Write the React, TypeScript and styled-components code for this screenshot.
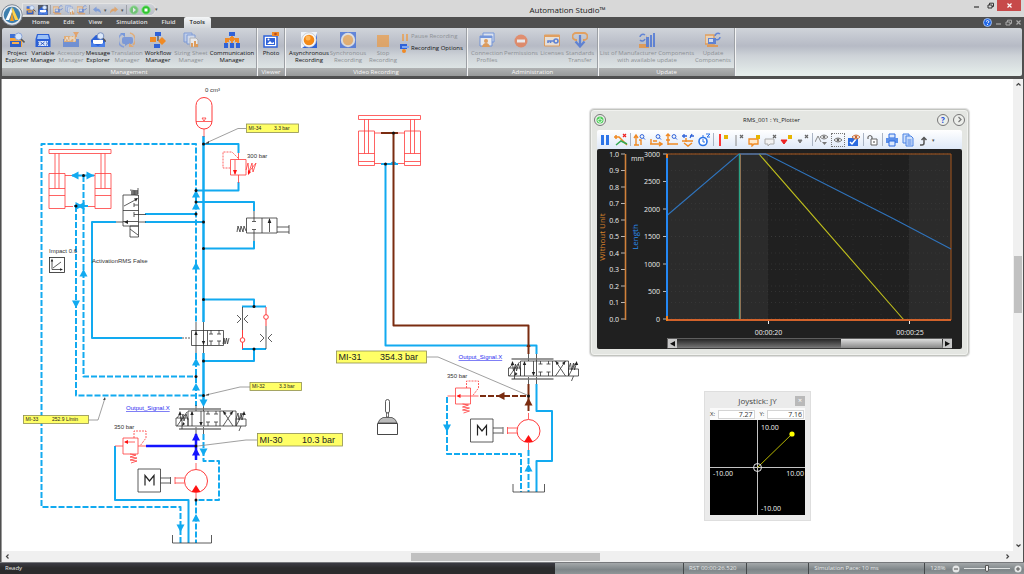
import React from 'react';
import styled, { createGlobalStyle, css } from 'styled-components';

const UI = "'Open Sans', 'Noto Sans', sans-serif";
const CAD = "'Liberation Sans', Arial, sans-serif";
const BLUE = '#12aaf0';
const DEEP = '#1414ff';
const BROWN = '#7a2c10';
const RED = '#ff3b3b';
const INK = '#333';

const Global = createGlobalStyle`
  * { box-sizing: border-box; }
  body { margin: 0; font-family: ${UI}; background: #4f4f4f; }
  button, input { font: inherit; color: inherit; border: 0; padding: 0; margin: 0; background: none; border-radius: 0; }
  svg { display: block; flex: none; }
`;

/* ---------- frame ---------- */

const Window = styled.div`
  display: flex;
  flex-direction: column;
  min-height: 100vh;
  background: #4f4f4f;
`;

const TitleBar = styled.header`
  display: flex;
  height: 17px;
  background: #d8d8d8;
  position: relative;
`;

const Logo = styled.button`
  position: absolute;
  left: 1px;
  top: 4px;
  width: 22px;
  height: 22px;
`;

const QuickAccess = styled.div`
  display: flex;
  align-items: center;
  align-self: flex-start;
  gap: 2px;
  height: 11px;
  margin: 4px 0 0 23px;
  padding: 0 4px 0 3px;
  border-radius: 0 6px 6px 0;
  background: linear-gradient(#cfd2d8, #b9bdc6);
  box-shadow: 0 0 0 1px #e4e4e4;
`;

const QuickButton = styled.button<{ $on?: boolean; $dim?: boolean }>`
  width: 10px;
  height: 10px;
  background: ${p => (p.$on ? '#555a66' : 'transparent')};
  svg { opacity: ${p => (p.$dim ? 0.55 : 1)}; }
`;

const QuickRule = styled.span`
  width: 1px;
  height: 9px;
  background: #9da0a8;
`;

const Caret = styled.button`
  font-size: 5px;
  line-height: 10px;
  color: #555;
`;

const AppTitle = styled.h1`
  flex: 1;
  margin: 0;
  padding: 3px 0 0 8px;
  text-align: center;
  font-size: 8px;
  line-height: 14px;
  font-weight: 400;
  color: #222;
`;

const WindowButton = styled.button<{ $close?: boolean }>`
  display: flex;
  align-items: center;
  justify-content: center;
  width: ${p => (p.$close ? '24px' : '14px')};
  height: 11px;
  margin-right: ${p => (p.$close ? '3px' : '0')};
  color: ${p => (p.$close ? '#fff' : '#333')};
  background: ${p => (p.$close ? '#c74a4a' : 'transparent')};
`;

const TabStrip = styled.nav`
  display: flex;
  align-items: stretch;
  gap: 2px;
  height: 11px;
  padding: 0 2px 0 26px;
`;

const Tab = styled.button<{ $on?: boolean }>`
  padding: 0 6px;
  font-size: 6px;
  line-height: 11px;
  font-weight: 600;
  color: ${p => (p.$on ? '#222' : '#e2e2e2')};
  border-radius: 2px 2px 0 0;
  background: ${p => (p.$on ? 'linear-gradient(#f4f6f7, #d2d6db)' : 'transparent')};
`;

const StripControls = styled.div`
  display: flex;
  align-items: center;
  gap: 3px;
  margin-left: auto;
  color: #aaa;
`;

/* ---------- ribbon ---------- */

const face = css`
  background: linear-gradient(#d0d4da 0, #b6bac5 18px, #ced3d8 28px, #e4ecea 46px);
`;

const Ribbon = styled.div`
  display: flex;
  gap: 2px;
  margin: 0 2px 3px;
  height: 48px;
  border-radius: 2px;
  ${face}
`;

const Group = styled.section<{ $width: number }>`
  display: flex;
  flex-direction: column;
  width: ${p => p.$width}px;
  box-shadow: 1px 0 0 #9ca0a5, 2px 0 0 #f4f4f4;
`;

const GroupBody = styled.div`
  display: flex;
  flex: 1;
  padding: 4px 0 0 2px;
`;

const GroupName = styled.h2`
  margin: 0;
  font-size: 6px;
  line-height: 8px;
  font-weight: 400;
  text-align: center;
  color: #f8f8f8;
  background: linear-gradient(#b0b2b3, #979999);
`;

const labelColour = css`
  color: #111;
  &:disabled { color: #8d9195; }
  &:disabled svg { opacity: 0.65; }
`;

const RibbonButton = styled.button<{ $width: number }>`
  display: flex;
  flex-direction: column;
  align-items: center;
  flex: none;
  gap: 2px;
  width: ${p => p.$width}px;
  font-size: 6px;
  line-height: 7px;
  white-space: pre;
  text-align: center;
  ${labelColour}
  span { display: flex; justify-content: center; width: 100%; }
`;

const SmallButtons = styled.div`
  display: flex;
  flex-direction: column;
  gap: 3px;
`;

const SmallButton = styled.button`
  display: flex;
  align-items: center;
  gap: 2px;
  font-size: 6px;
  line-height: 9px;
  white-space: nowrap;
  ${labelColour}
`;

/* ---------- work area ---------- */

const WorkArea = styled.main`
  display: grid;
  grid-template-columns: minmax(0, 1fr) 10px;
  grid-template-rows: 1fr 11px;
  flex: 1;
  margin: 0 1px 0 1px;
  border-left: 1px solid #999;
  background: #f0f0f0;
`;

const Sheet = styled.div`
  position: relative;
  background: #fff;
  overflow: hidden;
`;

const VScroll = styled.div`
  display: flex;
  flex-direction: column;
  align-items: center;
  padding: 2px 0;
`;

const HScroll = styled.div`
  display: flex;
  align-items: center;
  grid-column: 1;
  padding: 0 2px;
`;

const Gap = styled.span<{ $flex: number }>`
  flex: ${p => p.$flex} 1 0;
`;

const Thumb = styled.div<{ $w: string; $h: string }>`
  width: ${p => p.$w};
  height: ${p => p.$h};
  background: #c1c1c1;
`;

const ScrollButton = styled.button`
  width: 7px;
  height: 7px;
  color: #444;
`;

const StatusBar = styled.footer`
  display: flex;
  height: 12px;
  border-top: 1px solid #77797c;
  font-size: 6px;
  line-height: 11px;
  color: #e6e8e8;
  background: linear-gradient(#3c3c44, #2b2b2c 5px);
`;

const StatusReady = styled.div`
  flex: none;
  width: 54.2%;
  padding-left: 5px;
`;

const StatusCell = styled.div<{ $flex: number; $last?: boolean }>`
  display: flex;
  align-items: center;
  gap: 6px;
  flex: ${p => p.$flex} 1 0;
  min-width: 0;
  padding: 0 2px 0 5px;
  white-space: nowrap;
  border-right: ${p => (p.$last ? '0' : '1px solid #44484a')};
  background: linear-gradient(#a4a8aa, #7e8588 60%, #8f9698);
`;

const Zoom = styled.label`
  display: flex;
  align-items: center;
  flex: 1;
  min-width: 0;
  gap: 4px;
  input {
    appearance: none;
    flex: 1;
    width: 0;
    min-width: 0;
    height: 9px;
    background: linear-gradient(#dfe2e2, #dfe2e2) center / 100% 1px no-repeat;
  }
  input::-webkit-slider-thumb {
    appearance: none;
    width: 4px;
    height: 7px;
    border: 1px solid #555;
    border-radius: 0 0 2px 2px;
    background: #eee;
  }
`;

/* ---------- floating windows ---------- */

const Plotter = styled.section`
  position: absolute;
  left: 588px;
  top: 30px;
  width: 379px;
  padding: 2px 6px 6px;
  border: 1px solid #c2c4bf;
  border-radius: 4px;
  background: #e4e6e2;
  box-shadow: 0 0 1px 1px #dcdcdc, inset 0 0 0 1px #f1f2ef;
`;

const PlotterHead = styled.header`
  display: flex;
  align-items: center;
  gap: 4px;
  height: 15px;
  margin: 0 -3px 3px;
`;

const PlotterTitle = styled.h3`
  flex: 1;
  margin: 0;
  font-size: 6px;
  line-height: 12px;
  font-weight: 400;
  text-align: center;
  color: #222;
`;

const RoundButton = styled.button<{ $tone: string }>`
  width: 12px;
  height: 12px;
  border: 1px solid #777;
  border-radius: 50%;
  font-size: 8px;
  line-height: 10px;
  font-weight: 700;
  text-align: center;
  color: ${p => p.$tone};
  background: #eceeea;
  svg { margin: auto; }
`;

const PlotTools = styled.div`
  display: flex;
  align-items: center;
  height: 19px;
  border-radius: 2px 2px 0 0;
  background: linear-gradient(#fff, #dfe9f8);
`;

const ToolButton = styled.button<{ $boxed?: boolean }>`
  width: 16px;
  height: 16px;
  padding: 1px;
  outline: ${p => (p.$boxed ? '1px dotted #777' : '0')};
  outline-offset: -2px;
`;

const ToolRule = styled.span`
  width: 1px;
  height: 13px;
  margin: 0 1px;
  background: #aab4c4;
`;

const JoyPanel = styled.section`
  position: absolute;
  left: 702px;
  top: 312px;
  width: 107px;
  padding: 3px 5px 5px 5px;
  border: 1px solid #dedede;
  background: #ebebeb;
`;

const JoyHead = styled.header`
  display: flex;
  align-items: center;
  height: 11px;
  h3 {
    flex: 1;
    margin: 0;
    padding-left: 10px;
    text-align: center;
    font-size: 8px;
    line-height: 11px;
    font-weight: 400;
    color: #444;
  }
  button {
    width: 10px;
    height: 10px;
    font-size: 7px;
    line-height: 9px;
    color: #fff;
    background: #b9b9b9;
  }
`;

const JoyFields = styled.div`
  display: flex;
  gap: 5px;
  height: 12px;
  padding: 1px 1px 1px 0;
  margin-top: 2px;
  background: #fafafa;
  label {
    display: flex;
    align-items: center;
    flex: 1;
    gap: 3px;
    min-width: 0;
    font-size: 6px;
    color: #333;
  }
  input {
    flex: 1;
    min-width: 0;
    height: 9px;
    padding-right: 1px;
    border: 1px solid #d4d4d4;
    text-align: right;
    font-size: 7px;
    line-height: 7px;
    background: #fff;
  }
`;

/* ---------- ribbon icons, 16 x 16 ---------- */

const B = '#2f62d8';
const O = '#f08a24';

const icons: Record<string, React.ReactNode> = {
  project: (<>
    <path d="M1 4h5l1 2h6v9H1z" fill="#f6a53a" /><path d="M1 9h11v6H1z" fill="#2f5fc8" /><path d="M1 2h5v4H1z" fill="#3d6fd6" />
    <path d="M3 10h7v2H3z" fill="#f9b04e" /><circle cx="9.500" cy="4.500" r="3.500" fill="#d6e6fb" stroke="#8aa4d8" /><path d="M12 7l3.500 3.500" stroke="#555" strokeWidth="1.600" />
  </>),
  variable: (<>
    <path d="M2 2h12l1.500 5v8H.5V7z" fill="#2b60d6" /><path d="M3 3h10l1 4H2z" fill="#9cc0f5" /><path d="M3 9h10v5H3z" fill="#dbe7fb" />
    <path d="M5.500 10l4 3M9.500 10l-4 3M11.500 9.500q1.500 2 0 4M4 9.500q-1.500 2 0 4" stroke="#2050bb" fill="none" strokeWidth=".9" />
  </>),
  accessory: (<>
    <path d="M0 7h16v8H0z" fill="#4c79d8" /><path d="M1 4h12v6H1z" fill="#f0a24c" /><path d="M10 0h6l-2 3v2h-2V3z" fill="#f0903a" />
    <path d="M2 9l2-4 1.500 4M7 5v4M7 5h2v2H7M12 5h-2v2h2v2h-2" stroke="#fff" fill="none" strokeWidth=".8" />
  </>),
  message: (<>
    <path d="M1 8l5-5h5l4 5v7H1z" fill="#2b60d6" /><path d="M3 8h10v4H3z" fill="#fff" /><path d="M1 10l7 4 7-4v5H1z" fill="#4a7fe8" />
    <circle cx="10.500" cy="4" r="3.300" fill="#dce9fb" stroke="#7c93c0" /><path d="M13 6.500l3 3" stroke="#555" strokeWidth="1.500" />
  </>),
  translation: (<>
    <path d="M5 5h7q2 0 2 2v3q0 2-2 2H9l-3 2v-2H5q-2 0-2-2V7q0-2 2-2z" fill="#5a84de" />
    <path d="M5 15A7 7 0 0 1 3 2" stroke="#6b8fe0" strokeWidth="1.600" fill="none" /><path d="M11 1a7 7 0 0 1 3 12" stroke="#f0a050" strokeWidth="1.600" fill="none" /><path d="M1 1h5v4z" fill="#4d7ee0" /><path d="M15 15h-5v-4z" fill="#f0a050" />
  </>),
  workflow: (<>
    <path d="M8 4v5M4 13h5M11 9l2 2" stroke="#333" /><path d="M5 0h6v4H5z" fill={B} /><path d="M0 5h6v5H0z" fill={O} />
    <path d="M8 9l4-4 4 4-4 4z" fill={O} /><path d="M4 12h6v4H4z" fill={B} />
  </>),
  sizing: (<>
    <path d="M1 1h8v9H1z" fill="#bcd0f4" stroke="#5b84da" /><path d="M4 3h8v9H4z" fill="#d8e4fa" stroke="#5b84da" />
    <path d="M7 6h6l2 2v7H7z" fill="#fff" stroke="#aaa" /><path d="M8 11h2v4H8zM11 9h2v6h-2zM13 12h2v3h-2z" fill={O} />
  </>),
  communication: (<>
    <path d="M8 4v8M3 8l5-2 5 2M2 12V8M14 12V8" stroke={O} strokeWidth="1.800" fill="none" />
    <path d="M5 0h6v4H5zM0 11h4v5H0zM6 11h4v5H6zM12 11h4v5h-4z" fill={B} /><path d="M1 6h4v4H1zM11 6h4v4h-4zM6 5h4v4H6z" fill={O} />
  </>),
  photo: (<>
    <path d="M1 4h13v11H1z" fill="#fff" stroke={B} strokeWidth="1.500" /><path d="M3 6h9v7H3z" fill={B} /><path d="M4 12l3-3 2 2 2-1v2z" fill="#fff" /><circle cx="5.500" cy="7.500" r="1" fill="#fff" />
    <path d="M9 0h7v4H9z" fill={O} /><circle cx="12.500" cy="2" r="1.300" fill="#b9481c" />
  </>),
  async: (<>
    <path d="M0 0h16v16H0z" fill="#eef2f8" /><path d="M16 1v15H1l3-2h8l2-3z" fill={B} /><circle cx="8" cy="8" r="7.300" fill="#f6f6f6" stroke="#aeb7c6" strokeWidth=".6" /><circle cx="8" cy="8" r="5.300" fill="#f58a17" /><circle cx="7" cy="6" r="2.500" fill="#ffb557" />
  </>),
  sync: (<>
    <path d="M0 0h16v16H0z" fill="#2c60dc" /><circle cx="8" cy="8" r="7.200" fill="#e8e8e8" /><circle cx="8" cy="8" r="5.200" fill="#f5a545" />
  </>),
  stop: <path d="M2 3h12v12H2z" fill="#f0983a" />,
  connection: (<>
    <path d="M4 1h11v9H4z" fill="#e8f0fd" stroke="#4b7de0" /><path d="M1 4h12v10H1z" fill="#fff" stroke="#4b7de0" /><path d="M1 4h12v2H1z" fill="#4b7de0" />
    <circle cx="7" cy="9" r="2" fill={O} /><path d="M3 15q1-4 4-4t4 4z" fill={O} />
  </>),
  permissions: (<><circle cx="8" cy="9" r="6.500" fill="#f0703c" /><path d="M4 7.500h8v3H4z" fill="#fff" /></>),
  licenses: (<>
    <path d="M.5 3h15v11H.5z" fill="#fbeedd" stroke={O} /><path d="M1 3h14v2H1z" fill={O} /><circle cx="12" cy="9" r="2" fill="none" stroke={B} strokeWidth="1.600" /><path d="M10 9H4v2M6.500 9v2" stroke={B} strokeWidth="1.600" fill="none" />
  </>),
  standards: (<>
    <path d="M5 8H4a3.500 3.500 0 0 1 0-7h8a3.500 3.500 0 0 1 0 7h-1" fill="none" stroke={O} strokeWidth="1.800" /><path d="M8 3v11M3.500 9.500L8 14.500l4.500-5" fill="none" stroke={B} strokeWidth="2.200" />
  </>),
  list: (<>
    <path d="M0 12h7V3l3 9v4H0z" fill={O} /><path d="M7 5h3v10H7zM11 3h2v12h-2zM14 1h2v14h-2z" fill={B} />
    <path d="M1 5a3 3 0 0 1 5-2M6 7a3 3 0 0 1-5 1" stroke={B} strokeWidth="1.500" fill="none" />
  </>),
  update: (<>
    <path d="M0 3h9v9H0z" fill="#ffd9a8" stroke={O} strokeWidth="1.500" /><path d="M3 6h8v6H3z" fill={B} /><path d="M4 7h4v3H4z" fill="#dfe9fb" /><path d="M2 13h11v2H2z" fill={O} />
    <path d="M10 4a3 3 0 0 1 5-2M15 5a3 3 0 0 1-5 2" stroke={B} strokeWidth="1.500" fill="none" />
  </>),
};

const Icon = ({ name, size = 16 }: { name: string; size?: number }) => (
  <svg width={size} height={size} viewBox="0 0 16 16" aria-hidden="true">{icons[name]}</svg>
);

type Command = { icon: string; label: string; width: number; off?: boolean };

const management: Command[] = [
  { icon: 'project', label: 'Project\nExplorer', width: 26 },
  { icon: 'variable', label: 'Variable\nManager', width: 26 },
  { icon: 'accessory', label: 'Accessory\nManager', width: 30, off: true },
  { icon: 'message', label: 'Message\nExplorer', width: 24 },
  { icon: 'translation', label: 'Translation\nManager', width: 34, off: true },
  { icon: 'workflow', label: 'Workflow\nManager', width: 28 },
  { icon: 'sizing', label: 'Sizing Sheet\nManager', width: 38, off: true },
  { icon: 'communication', label: 'Communication\nManager', width: 44 },
];
const recording: Command[] = [
  { icon: 'async', label: 'Asynchronous\nRecording', width: 42 },
  { icon: 'sync', label: 'Synchronous\nRecording', width: 36, off: true },
  { icon: 'stop', label: 'Stop\nRecording', width: 34, off: true },
];
const administration: Command[] = [
  { icon: 'connection', label: 'Connection\nProfiles', width: 34, off: true },
  { icon: 'permissions', label: 'Permissions', width: 34, off: true },
  { icon: 'licenses', label: 'Licenses', width: 28, off: true },
  { icon: 'standards', label: 'Standards\nTransfer', width: 28, off: true },
];
const updates: Command[] = [
  { icon: 'list', label: 'List of Manufacturer Components\nwith available update', width: 92, off: true },
  { icon: 'update', label: 'Update\nComponents', width: 40, off: true },
];

const Commands = ({ items }: { items: Command[] }) => (
  <>
    {items.map(c => (
      <RibbonButton key={c.label} $width={c.width} disabled={c.off}>
        <Icon name={c.icon} />
        <span>{c.label}</span>
      </RibbonButton>
    ))}
  </>
);

/* ---------- plotter tools, 14 x 14 ---------- */

const lens = (x: number, y: number) => (
  <g stroke={B} fill="none"><circle cx={x} cy={y} r="1.900" /><path d={`M${x + 1.500} ${y + 1.500}l1.500 1.500`} /></g>
);
const eye = (x: number, y: number, c: string) => (
  <g transform={`translate(${x} ${y})`}><path d="M-4 0q4-4 8 0q-4 4-8 0z" fill="#fff" stroke={c} strokeWidth=".9" /><circle r="1.400" fill={c} /></g>
);
const cross = (x: number, y: number, c: string) => <path d={`M${x} ${y}l3 3m0-3l-3 3`} stroke={c} strokeWidth="1.200" />;

const tools: { name: string; art?: React.ReactNode; boxed?: boolean }[] = [
  { name: 'Pause', art: <path d="M3 2h3v10H3zM8 2h3v10H8z" fill="#2c74e8" /> },
  { name: 'Clear curves', art: <><path d="M0 4h5L13 12M2 2v4" stroke={O} fill="none" strokeWidth="1.500" /><path d="M2 12l5-4 6 3" stroke="#34a853" fill="none" strokeWidth="1.500" />{cross(9, 1, '#e22')}</> },
  { name: '|' },
  { name: 'Zoom vertical', art: <><path d="M3 12V3M1 5l2-3 2 3M1 12h5M6 7h2v5" stroke={O} fill="none" strokeWidth="1.400" />{lens(9, 3.500)}</> },
  { name: 'Zoom horizontal', art: <><path d="M1 11h11M10 9l3 2-3 2M2 6v5M4 8h4" stroke={O} fill="none" strokeWidth="1.400" />{lens(9, 3.500)}</> },
  { name: 'Zoom both', art: <><path d="M3 12V1M1 3l2-2 2 2M3 11h10M1 7h4" stroke={O} fill="none" strokeWidth="1.400" />{lens(9, 3.500)}</> },
  { name: 'Fit curves', art: <><path d="M1 3h5M3 1v4M9 3h4M11 1l-2 4" stroke={B} fill="none" strokeWidth="1.300" /><path d="M1 8h11M5 5v4M3 10l4 3 4-3" stroke={O} fill="none" strokeWidth="1.400" /></> },
  { name: 'Time range', art: <><circle cx="6" cy="8.500" r="4" fill="#fff" stroke="#2c74e8" strokeWidth="1.600" /><path d="M6 6v3h2M5 3h2M9 1h4l-3 3h3" stroke="#2c74e8" fill="none" /></> },
  { name: '|' },
  { name: 'Add cursor', art: <><path d="M4 1v12" stroke="#f22" strokeWidth="1.800" /><path d="M8 2h4v4H8z" fill="#e6b400" /></> },
  { name: 'Remove cursor', art: <><path d="M4 2v11" stroke="#888" />{cross(8, 2, '#666')}</> },
  { name: 'Add note', art: <><path d="M1 6h9v5H6l-2 2v-2H1z" fill="#ffe8c8" stroke={O} strokeWidth="1.300" /><path d="M8 2h4v4H8z" fill="#e6b400" /></> },
  { name: 'Remove note', art: <><path d="M1 6h9v5H6l-2 2v-2H1z" fill="#f2f2f2" stroke="#aaa" />{cross(9, 2, '#666')}</> },
  { name: 'Add marker', art: <><path d="M1 7h6L4 11z" fill="#e22" stroke="#e22" /><path d="M8 2h4v4H8z" fill="#e6b400" /></> },
  { name: 'Remove marker', art: <><path d="M2 7h4L4 10z" fill="#777" stroke="#777" />{cross(9, 2, '#666')}</> },
  { name: '|' },
  { name: 'Show curve', art: <><path d="M0 9l3-6 3 6" stroke="#888" fill="none" />{eye(9, 4, '#777')}<path d="M7 9h5l-2.500 3z" fill="#777" /></> },
  { name: 'Show all', art: eye(7, 7, '#666'), boxed: true },
  { name: 'Select curves', art: <><path d="M1 5h10v8H1z" fill="#2c6be0" /><path d="M3 9l2 2 4-5" stroke="#fff" strokeWidth="1.500" fill="none" />{eye(9, 4, '#c8642a')}</> },
  { name: '|' },
  { name: 'Unlock', art: <><path d="M5 6h6v6H5z" fill="#fff" stroke="#666" /><path d="M6 6V4Q4 1 2 4v2M8 8v2" stroke="#666" fill="none" strokeWidth="1.200" /></> },
  { name: '|' },
  { name: 'Print', art: <><path d="M4 1h6v4H4z" fill="#dbe8fc" stroke="#2c6be0" /><path d="M1 5h12v5H1z" fill="#5b8fea" /><path d="M4 8h6v5H4z" fill="#dbe8fc" stroke="#2c6be0" /></> },
  { name: 'Copy', art: <><path d="M2 1h6v9H2z" fill="#cfe0fb" stroke="#4b82e4" /><path d="M5 3h5l2 2v8H5z" fill="#cfe0fb" stroke="#4b82e4" /><path d="M6.500 7h4M6.500 9h4M6.500 11h4" stroke="#2c6be0" strokeWidth=".8" /></> },
  { name: 'Export', art: <path d="M3 12h2q2 0 2-2V5M4.500 7L7 4.500L9.500 7" stroke="#555" fill="none" strokeWidth="1.500" /> },
];

/* ---------- hydraulic symbols ---------- */

const Pipe = ({ d, c = BLUE, dash, w = 2 }: { d: string; c?: string; dash?: boolean; w?: number }) => (
  <path d={d} fill="none" stroke={c} strokeWidth={w} strokeDasharray={dash ? '6 2' : undefined} strokeLinejoin="round" />
);

const Thin = ({ d, c = INK, dash, fill = 'none' }: { d: string; c?: string; dash?: boolean; fill?: string }) => (
  <path d={d} fill={fill} stroke={c} strokeWidth={0.8} strokeDasharray={dash ? '2 1' : undefined} />
);

const Arrow = ({ x, y, r = 0, c = BLUE }: { x: number; y: number; r?: number; c?: string }) => (
  <path d="M0-4L4 3.500H-4z" fill={c} transform={`translate(${x} ${y}) rotate(${r})`} />
);

const Node = ({ x, y }: { x: number; y: number }) => <circle cx={x} cy={y} r={1.500} fill="#111" />;

const Note = ({ x, y, w, h, id, value, vx, size = 5 }: { x: number; y: number; w: number; h: number; id: string; value: string; vx: number; size?: number }) => (
  <g fontSize={size} fill="#222">
    <rect x={x} y={y} width={w} height={h} fill="#ffff66" stroke="#8f8f50" strokeWidth={0.800} />
    <text x={x + 2} y={y + h / 2 + size * 0.36}>{id}</text>
    <text x={vx} y={y + h / 2 + size * 0.36}>{value}</text>
  </g>
);

/* two cylinders under one beam; top and bottom bound the barrels, face and back the piston */
const Cylinders = ({ x, y, top, bottom, face: f, back }: { x: number; y: number; top: number; bottom: number; face: number; back: number }) => (
  <g transform={`translate(${x} ${y})`}>
    <Thin c={RED} d={`M0 0H62V4H0zM6 4V${f}M10 4V${f}M52 4V${f}M56 4V${f}M0 ${top}H16V${bottom}H0zM46 ${top}H62V${bottom}H46zM0 ${f}H16M46 ${f}H62M0 ${back}H16M46 ${back}H62`} />
    <Thin c={RED} d={`M16 ${top + 2}H24M38 ${top + 2}H46M16 ${bottom - 2}H24M38 ${bottom - 2}H46`} />
  </g>
);

const Spool = ({ x, y }: { x: number; y: number }) => (
  <g transform={`translate(${x} ${y})`}>
    <path d="M0 0H42M0 20H42" stroke="#777" strokeWidth="1.400" />
    <Thin d="M9 2H57V17H9zM25 2V17M41 2V17M-3 9H9V17H-3zM57 10H67V17H57z" />
    <Thin d="M13 17V3M22 2V16M29 2V5M27 5H31M37 2V5M35 5H39M29 17V13M27 13H31M37 17V13M35 13H39M44 2L54 17M54 2L44 17" />
    <Thin d="M-2 17L8 3M-2 9L1 5L2 12L4 5L5 12L7 5L9 11M57 10L59 4L60 11L62 4L63 11L65 4M57 17L64 4M3 9V20M62 17L60 22" />
    <path d="M13 2l-1.700 4h3.400zM22 17l-1.700-4h3.400zM1 2l-1.700 4h3.400zM65 2l-1.700 4h3.400zM44 2l1 4 2.500-2zM54 2l-1 4-2.500-2zM3 17l1-4 2 2z" fill="#222" />
  </g>
);

const Relief = ({ x, y, mid }: { x: number; y: number; mid: number }) => (
  <g transform={`translate(${x} ${y})`}>
    <Thin c={RED} d={`M8 0H23V16H8zM0 8H8M23 8H31M10 ${mid}H${mid === 8 ? 23 : 20}M15 16l6 1-6 2 7 1-7 2 7 1-6 2`} />
    <path d={`M9 ${mid}l4-2v4z`} fill="#f11" />
    <Thin c={RED} dash d="M19 0V-7H31V0L25 8" />
  </g>
);

const PumpUnit = ({ x, y }: { x: number; y: number }) => (
  <g transform={`translate(${x} ${y})`}>
    <Thin d="M0 0H22.500V23H0zM22.500 9H32M22.500 14H32M32.500 8V15" />
    <path d="M7 16.500V6.500L11.500 12L16 6.500V16.500" fill="none" stroke="#222" strokeWidth="1.200" />
    <Thin c={RED} d="M37 8V15M37 9H46.500M37 14H46.500M58 0V-6M58 23V31" />
    <circle cx={58} cy={12} r={11.500} fill="#fff" stroke={RED} />
    <path d="M58 16l4.500 7h-9z" fill="#f11" />
  </g>
);

const SignalLink = ({ x, y }: { x: number; y: number }) => (
  <a href="#output-signal"><text x={x} y={y} fill="#2a2af0" textDecoration="underline">Output_Signal.X</text></a>
);

const nodes = [
  [203.500, 144], [196, 190.500], [196, 202], [196, 214], [203.500, 222], [203.500, 248.500], [83.500, 175.500], [76, 206],
  [203.500, 299.500], [254, 306.500], [254, 349], [203.500, 361], [196, 376.500], [203.500, 395.500], [196, 446], [196, 500],
  [393.500, 133], [385.500, 164], [528.500, 396],
];

const Schematic = () => (
  <svg width="1010" height="468" viewBox="2 79 1010 468" fontFamily={CAD} fontSize="6" fill="#333">
    {/* return and pilot lines */}
    <Pipe dash d="M180.500 543V507H41.500V144H196V322" />
    <Pipe dash d="M83.500 176V376.500H196" />
    <Pipe dash d="M76 206V395.500H203" />
    <Pipe dash d="M196 353V406" />
    <Pipe dash d="M203.500 434V461H219V500H196V543" />
    {/* pressure lines */}
    <Pipe d="M203.500 136V322M203.500 353V402" w={2.500} />
    <Pipe d="M204 144H238.500V153M238.500 182V190.500H196" />
    <Pipe d="M196 202H254V211M254 241V248.500H204" />
    <Pipe d="M145 214H196M145 222H203M116 222H92V338H182" />
    <Pipe d="M204 299.500H254V306.500M242 306.500H266M242 349H266M254 349V361H204" />
    <Pipe d="M115 446V500H188.500V543" />
    <Pipe c={DEEP} d="M146 446H196M196 460V434" w={2.500} />

    {/* accumulator */}
    <text x="205" y="92">0 cm³</text>
    <rect x="196" y="97.500" width="16" height="31.500" rx="8" fill="#fff" stroke={RED} />
    <Thin c={RED} d="M196 121.500H212M202 118h4l-2 3zM204 129V137" />

    {/* 300 bar relief */}
    <text x="247" y="158">300 bar</text>
    <Thin c={RED} d="M230.500 159.500H246V175H230.500zM238.500 153V159.500M238.500 175V183M235 160V174M246 170l2-7 1 9 3-9 1 9 3-9M248 173l8-10" />
    <path d="M235 175l-2-5h4zM248 175l0-5 3 2z" fill="#f11" />
    <Thin c={RED} dash d="M238 158L232 152H223V168H230" />

    {/* manual valve */}
    <Thin d="M246.500 218H277V233H246.500zM262 218V233M254 211V221M252 221.500H256M254 241V230M252 229.500H256M269.500 232V219M277 227H289M277 232H289M289 225V234M237 232l1-6 2 6 1-6 2 6 1-6 2 5" />
    <path d="M269.500 218l-1.800 5h3.600z" fill="#222" />

    {/* twin cylinders */}
    <Cylinders x={49} y={149.500} top={24} bottom={59} face={39} back={46} />
    <Pipe d="M72 175.500H94M74 206H88" />
    <Arrow x={75} y={175.500} r={-90} /><Arrow x={90} y={175.500} r={90} />
    <Arrow x={79} y={206} r={90} /><Arrow x={81} y={206} r={-90} />

    {/* solenoid valve */}
    <Thin fill="#fff" d="M123 195H138.500V226H123zM123 210.500H138.500M130 226H138.500V237H130zM130 229L138 235M124 206L137 199M138 205H134M134 203V207M138 214.500H134M134 212V217M123 221.500H138" />
    <Thin d="M138 214.500H146M138 222H146M116 222H123M130 190l8 1-7 1 7 1-7 1 7 1M138 188v6" />
    <path d="M138 198l-4 .5 2 3zM124 222l4-2v4z" fill="#222" />

    {/* text and scope symbol */}
    <text x="49" y="253">Impact 0.6</text>
    <rect x="49.500" y="257.500" width="15" height="15" fill="#fff" stroke="#222" strokeWidth=".8" />
    <Thin d="M52 260V269.500H62M53 268L61 262" />
    <path d="M52 258.500l-1.200 3h2.400zM63 269.500l-3-1.200v2.400z" fill="#222" />
    <text x="92" y="263">ActivationRMS False</text>

    {/* two-way valve */}
    <Thin d="M191.500 330.500H223.500V345.500H191.500zM207.500 330.500V345.500M196 322V353M203.500 322V353M211 330V334M209 334H213M219 330V334M217 334H221M211 345V341M209 341H213M219 345V341M217 341H221M223 344l1-6 1 6 1.500-6 1 6 1.500-6" />
    <Thin dash d="M182 338H191" />
    <path d="M196 331l-1.700 4h3.400zM203.500 345l-1.700-4h3.400z" fill="#222" />

    {/* check and orifice pair */}
    <Thin d="M242.500 307V330M266 326V349M237 315l4 4-4 4M248 315l-4 4 4 4M260 334l4 4-4 4M272 334l-4 4 4 4" />
    <path d="M242.500 330V349M266 307V326" stroke={RED} />
    <circle cx="242.500" cy="340" r="2.300" fill="#fff" stroke={RED} /><circle cx="266" cy="317" r="2.300" fill="#fff" stroke={RED} />

    {/* main spool, pump and tank */}
    <SignalLink x={126} y={410} />
    <Thin d="M196 405V411M203.500 405V411M196 427V434M203.500 427V434" />
    <Spool x={179} y={409} />
    <text x="114" y="429">350 bar</text>
    <Relief x={115} y={438} mid={4} />
    <PumpUnit x={138} y={469} />
    <Thin d="M172.500 535V543H211.500V535" />

    {/* second circuit */}
    <Cylinders x={358.500} y={115.500} top={15.500} bottom={50} face={38} back={46} />
    <Pipe d="M381 164H398M385.500 164V345.500H536.500V354" />
    <path d="M390.500 164a3 2.500 0 0 1 6 0z" fill={BLUE} />
    <Pipe c={BROWN} d="M381 133H398M393.500 133V325.500H528.500V354" />
    <path d="M526.500 347a2 2.500 0 0 1 4 0z" fill={BROWN} />
    <SignalLink x={458.500} y={359} />
    <Thin d="M528.500 354V361M536.500 354V361M528.500 377V384M536.500 377V384" />
    <Spool x={511.500} y={359} />
    <text x="447" y="378">350 bar</text>
    <Relief x={447.500} y={388} mid={8} />
    <Pipe c={BROWN} d="M528.500 384V411" />
    <Pipe c={BROWN} dash d="M526 396H478" />
    <Pipe d="M536.500 384V411H552V461H536.500V492" />
    <Pipe dash d="M447 397V454H521V492" />
    <Pipe dash d="M528.500 450V492" />
    <PumpUnit x={470.500} y={419} />
    <Thin d="M513 484V492H544.500V484" />

    {/* flow directions */}
    <Arrow x={196} y={194} /><Arrow x={196} y={206} /><Arrow x={196} y={266} />
    <Arrow x={83.500} y={273} /><Arrow x={76} y={304} r={180} />
    <Arrow x={196} y={362} /><Arrow x={196} y={387} /><Arrow x={203.500} y={403} r={180} />
    <Arrow x={196} y={437} c={DEEP} /><Arrow x={196} y={452} c={DEEP} /><Arrow x={203.500} y={452} r={180} />
    <Arrow x={180.500} y={528} r={180} /><Arrow x={196} y={518} />
    <Arrow x={501} y={396} r={-90} c={BROWN} /><Arrow x={528.500} y={402} c={BROWN} />
    <Arrow x={447} y={428} r={180} /><Arrow x={528.500} y={468} />

    {nodes.map(([x, y]) => <Node key={`${x}-${y}`} x={x} y={y} />)}

    {/* measuring labels */}
    <Thin c="#888" d="M206 143L238 128.500H246M206 395L240 387H250M88 420H98L105 398M198 446L246 440H257M427 357H438L527 395" />
    <path d="M205 144l4-3v2.500zM205 395.500l4-2v2zM105 397l-2 3h2.500z" fill="#444" />
    <Note x={246.500} y={124} w={52} h={8.500} id="MI-34" value="3.3 bar" vx={274} />
    <Note x={250} y={382.500} w={51.500} h={8} id="MI-32" value="3.3 bar" vx={279} />
    <Note x={23.500} y={415.500} w={65} h={8} id="MI-33" value="252.9 L/min" vx={52} />
    <Note x={257.500} y={433.500} w={85} h={12.500} id="MI-30" value="10.3 bar" vx={302} size={9} />
    <Note x={336.500} y={351} w={90} h={12} id="MI-31" value="354.3 bar" vx={380} size={9} />

    {/* joystick symbol */}
    <rect x="385.500" y="399.500" width="4" height="13.500" rx="2" fill="#fff" stroke="#333" strokeWidth=".8" />
    <path d="M386.500 413h2v4h-2z" fill="#fff" stroke="#333" strokeWidth=".7" />
    <path d="M378 423q1-4 5-5.500h9q4 1.500 5 5.500z" fill="#bbb" stroke="#333" strokeWidth=".7" />
    <path d="M377.500 423.500H397.500V434.500H377.500z" fill="#fff" stroke="#333" strokeWidth=".9" />
  </svg>
);

/* ---------- plot ---------- */

const unitTicks = Array.from({ length: 11 }, (_, i) => ({ y: 154 + i * 16.500, t: (1 - i / 10).toFixed(1) }));
const mmTicks = Array.from({ length: 7 }, (_, i) => ({ y: 154 + i * 27.500, t: String(3000 - i * 500) }));

const Plot = () => (
  <svg width="100%" height="200" viewBox="597 149 365 200" fontFamily={UI} fontSize="7" fill="#ececec">
    <defs>
      <linearGradient id="track" x1="0" y1="0" x2="0" y2="1"><stop offset="0" stopColor="#222" /><stop offset="1" stopColor="#777" /></linearGradient>
      <linearGradient id="thumb" x1="0" y1="0" x2="0" y2="1"><stop offset="0" stopColor="#ddd" /><stop offset="1" stopColor="#888" /></linearGradient>
    </defs>
    <rect x="597" y="149" width="365" height="200" rx="2" fill="#202020" />
    <path d="M667 154H768V320H667zM909 154H951V320H909z" fill="#2b2b2b" />
    <path d={mmTicks.map(t => `M667 ${t.y}H951`).join('') + unitTicks.map(t => `M667 ${t.y}H951`).join('')} stroke="#3b3b3b" strokeWidth=".7" strokeDasharray="1 3" />
    <path d="M695 154V320M723 154V320M768 154V320M796 154V320M824 154V320M853 154V320M881 154V320M909 154V320M937 154V320" stroke="#333" strokeWidth=".6" strokeDasharray="1 4" />
    {unitTicks.map(t => <g key={t.t}><text x="619" y={t.y + 2.500} textAnchor="end">{t.t}</text><path d={`M621 ${t.y}H625`} stroke="#ddd" strokeWidth=".8" /></g>)}
    {mmTicks.map(t => <g key={t.t}><text x="660" y={t.y + 2.500} textAnchor="end">{t.t}</text><path d={`M663 ${t.y}H667`} stroke="#ddd" strokeWidth=".8" /></g>)}
    <text x="631" y="161">mm</text>
    <path d="M625.500 154V320" stroke="#d0813a" strokeWidth="1.600" />
    <text fontSize="8" fill="#d9822b" textAnchor="middle" transform="translate(605 237) rotate(-90)">Without Unit</text>
    <text fontSize="8" fill="#2a8cf0" textAnchor="middle" transform="translate(638 237) rotate(-90)">Length</text>
    <path d="M667 154H951V320" stroke="#a8571c" fill="none" />
    <path d="M667.500 215L739 154H766L893 218.500L951 249" stroke="#2f74bd" fill="none" strokeWidth="1.100" />
    <path d="M759 154L903.500 319.500" stroke="#c2c21c" fill="none" strokeWidth="1.100" />
    <path d="M739 154H766" stroke="#4f6f9f" />
    <path d="M740.500 154V320" stroke="#a8684a" /><path d="M739.500 154V320" stroke="#2aa184" strokeWidth="1.400" />
    <path d="M667 320H951" stroke="#d2622a" strokeWidth="2" />
    <path d="M667 154V320" stroke="#2488f5" strokeWidth="2" /><path d="M667 154v4M667 316v5" stroke="#f08020" strokeWidth="2" />
    <path d="M768.500 321V324M909.500 321V324" stroke="#eee" />
    <text x="768.500" y="335" textAnchor="middle">00:00:20</text>
    <text x="910" y="335" textAnchor="middle">00:00:25</text>
    <rect x="667.500" y="338.500" width="284" height="9.500" fill="url(#track)" stroke="#888" strokeWidth=".6" />
    <rect x="841" y="339" width="101" height="9" fill="url(#thumb)" />
    <rect x="668" y="339" width="9" height="9" fill="#c8c8c8" /><rect x="943" y="339" width="9" height="9" fill="#c8c8c8" />
    <path d="M675 341v5.500l-5-2.700zM945 341v5.500l5-2.700z" fill="#111" />
  </svg>
);

const JoyPlot = () => (
  <svg width="95" height="95" viewBox="0 0 95 95" fontFamily={UI} fontSize="7" fill="#f2f2f2">
    <rect width="95" height="95" fill="#000" />
    <path d="M47.500 0V95M0 47.500H95" stroke="#c4c4c4" />
    <path d="M47.500 47.500L82 14" stroke="#b5b500" />
    <circle cx="47.500" cy="47.500" r="4" fill="none" stroke="#e8e8e8" />
    <circle cx="82" cy="14" r="2.600" fill="#ff0" />
    <text x="51" y="10">10.00</text>
    <text x="3" y="56">-10.00</text>
    <text x="94" y="56" textAnchor="end">10.00</text>
    <text x="51" y="91">-10.00</text>
  </svg>
);

/* ---------- small glyphs ---------- */

const Glyph = ({ d, size = 7, w = 1.200 }: { d: string; size?: number; w?: number }) => (
  <svg width={size} height={size} viewBox="0 0 7 7"><path d={d} fill="none" stroke="currentColor" strokeWidth={w} /></svg>
);
const MIN = 'M1 5H6';
const RESTORE = 'M1 3H5V6H1zM2.500 3V1.200H6.500V4.500H5';
const CLOSE = 'M1.500 1.500L5.500 5.500M5.500 1.500L1.500 5.500';

const Swirl = ({ flip }: { flip?: boolean }) => (
  <svg width="10" height="10" viewBox="0 0 10 10">
    <path transform={flip ? 'translate(10 0) scale(-1 1)' : undefined} d="M1 4.500L4.500 1.500V3.500Q9 3.500 9 8.500Q7.500 5.800 4.500 6V7.500z" fill={flip ? O : '#4a7ce0'} />
  </svg>
);
const GreenDot = ({ d }: { d: string }) => (
  <svg width="10" height="10" viewBox="0 0 10 10"><circle cx="5" cy="5" r="4.300" fill="#2fc42f" stroke="#8fe08f" /><path d={d} fill="#fff" /></svg>
);

export default function App() {
  return (
    <Window>
      <Global />
      <TitleBar>
        <QuickAccess>
          <QuickButton aria-label="Project explorer"><Icon name="project" size={10} /></QuickButton>
          <QuickButton aria-label="Library" $on><Icon name="message" size={10} /></QuickButton>
          <QuickRule />
          <QuickButton aria-label="Open" $dim><Icon name="update" size={10} /></QuickButton>
          <QuickButton aria-label="Save" $dim><Icon name="sizing" size={10} /></QuickButton>
          <QuickButton aria-label="Print" $dim><Icon name="update" size={10} /></QuickButton>
          <QuickRule />
          <QuickButton aria-label="Undo" $dim><Swirl /></QuickButton>
          <Caret aria-label="Undo list">▾</Caret>
          <QuickButton aria-label="Redo" $dim><Swirl flip /></QuickButton>
          <Caret aria-label="Redo list">▾</Caret>
          <QuickRule />
          <QuickButton aria-label="Simulate" $dim><GreenDot d="M4 2.500L7 5L4 7.500z" /></QuickButton>
          <QuickButton aria-label="Stop"><GreenDot d="M3.500 3.500h3v3h-3z" /></QuickButton>
        </QuickAccess>
        <Caret aria-label="Customize toolbar">▾</Caret>
        <AppTitle>Automation Studio™</AppTitle>
        <WindowButton aria-label="Minimize"><Glyph d={MIN} /></WindowButton>
        <WindowButton aria-label="Restore"><Glyph d={RESTORE} w={1} /></WindowButton>
        <WindowButton aria-label="Close" $close><Glyph d={CLOSE} /></WindowButton>
        <Logo aria-label="Application menu">
          <svg width="22" height="22" viewBox="0 0 22 22">
            <circle cx="11" cy="11" r="10.300" fill="#e6eaf0" stroke="#7d8794" />
            <circle cx="11" cy="11" r="8.300" fill="#3f7fae" />
            <path d="M10.500 3L4.500 16h3.500L11 8z" fill="#fff" /><path d="M11.500 3L17.500 16H14L11 8z" fill="#ffd24a" />
            <path d="M11 8l2 9h-4z" fill="#f39a1d" />
          </svg>
        </Logo>
      </TitleBar>
      <TabStrip>
        {['Home', 'Edit', 'View', 'Simulation', 'Fluid', 'Tools'].map(t => <Tab key={t} $on={t === 'Tools'}>{t}</Tab>)}
        <StripControls>
          <svg width="9" height="9" viewBox="0 0 9 9"><circle cx="4.500" cy="4.500" r="4" fill="#2268e8" stroke="#bcd3fa" strokeWidth=".8" /><path d="M3 3.500q1.500-2 3 0q0 1-1.500 1.500M4.500 6v1" stroke="#fff" fill="none" strokeWidth=".9" /></svg>
          <Glyph d={MIN} /><Glyph d={RESTORE} w={1} /><Glyph d={CLOSE} />
        </StripControls>
      </TabStrip>
      <Ribbon>
        <Group $width={254}>
          <GroupBody><Commands items={management} /></GroupBody>
          <GroupName>Management</GroupName>
        </Group>
        <Group $width={26}>
          <GroupBody><Commands items={[{ icon: 'photo', label: 'Photo', width: 22 }]} /></GroupBody>
          <GroupName>Viewer</GroupName>
        </Group>
        <Group $width={180}>
          <GroupBody>
            <Commands items={recording} />
            <SmallButtons>
              <SmallButton disabled>
                <svg width="9" height="8" viewBox="0 0 9 8"><path d="M2 1h2v7H2zM6 1h2v7H6z" fill="#f0983a" /></svg>Pause Recording
              </SmallButton>
              <SmallButton>
                <svg width="9" height="9" viewBox="0 0 9 9"><path d="M0 0h7v5H0z" fill={B} /><path d="M2 2h7v2H2z" fill="#7fa6f0" /><circle cx="4" cy="7" r="2" fill={O} /></svg>Recording Options
              </SmallButton>
            </SmallButtons>
          </GroupBody>
          <GroupName>Video Recording</GroupName>
        </Group>
        <Group $width={129}>
          <GroupBody><Commands items={administration} /></GroupBody>
          <GroupName>Administration</GroupName>
        </Group>
        <Group $width={135}>
          <GroupBody><Commands items={updates} /></GroupBody>
          <GroupName>Update</GroupName>
        </Group>
      </Ribbon>

      <WorkArea>
        <Sheet>
          <Schematic />
          <Plotter>
            <PlotterHead>
              <RoundButton $tone="#3cc44a" aria-label="Power">
                <svg width="8" height="8" viewBox="0 0 8 8"><circle cx="4" cy="4" r="3.500" fill="#4fd05a" /><path d="M4 1.500V4M2.500 3a2 2 0 1 0 3 0" stroke="#fff" fill="none" strokeWidth=".9" /></svg>
              </RoundButton>
              <PlotterTitle>RMS_001 : Yt_Plotter</PlotterTitle>
              <RoundButton $tone="#1d4fd8" aria-label="Help">?</RoundButton>
              <RoundButton $tone="#777" aria-label="Expand"><Glyph d="M2.500 1L5 3.500L2.500 6" /></RoundButton>
            </PlotterHead>
            <PlotTools>
              {tools.map((t, i) => t.name === '|'
                ? <ToolRule key={i} />
                : <ToolButton key={i} aria-label={t.name} $boxed={t.boxed}><svg width="14" height="14" viewBox="0 0 14 14">{t.art}</svg></ToolButton>)}
              <Caret aria-label="More tools">▾</Caret>
            </PlotTools>
            <Plot />
          </Plotter>
          <JoyPanel>
            <JoyHead><h3>Joystick: JY</h3><button aria-label="Close joystick">×</button></JoyHead>
            <JoyFields>
              <label>X:<input defaultValue="7.27" /></label>
              <label>Y:<input defaultValue="7.16" /></label>
            </JoyFields>
            <JoyPlot />
          </JoyPanel>
        </Sheet>
        <VScroll>
          <ScrollButton aria-label="Scroll up"><Glyph d="M1.500 4.500L3.500 2.500L5.500 4.500" /></ScrollButton>
          <Gap $flex={42} />
          <Thumb $w="8px" $h="57px" />
          <Gap $flex={57} />
          <ScrollButton aria-label="Scroll down"><Glyph d="M1.500 2.500L3.500 4.500L5.500 2.500" /></ScrollButton>
        </VScroll>
        <HScroll>
          <ScrollButton aria-label="Scroll left"><Glyph d="M4.500 1.500L2.500 3.500L4.500 5.500" /></ScrollButton>
          <Gap $flex={100} />
          <Thumb $w="189px" $h="8px" />
          <Gap $flex={101} />
          <ScrollButton aria-label="Scroll right"><Glyph d="M2.500 1.500L4.500 3.500L2.500 5.500" /></ScrollButton>
        </HScroll>
      </WorkArea>

      <StatusBar>
        <StatusReady>Ready</StatusReady>
        <StatusCell $flex={132} />
        <StatusCell $flex={60}>RST 00:00:26.520</StatusCell>
        <StatusCell $flex={59} />
        <StatusCell $flex={118}>Simulation Pace: 10 ms</StatusCell>
        <StatusCell $flex={100} $last>
          128%
          <Zoom>
            <svg width="8" height="8" viewBox="0 0 8 8"><circle cx="4" cy="4" r="3.500" fill="#e4e6e6" /><path d="M2 4h4" stroke="#555" /></svg>
            <input type="range" aria-label="Zoom" defaultValue="50" />
            <svg width="8" height="8" viewBox="0 0 8 8"><circle cx="4" cy="4" r="3.500" fill="#e4e6e6" /><path d="M2 4h4M4 2v4" stroke="#555" /></svg>
          </Zoom>
        </StatusCell>
      </StatusBar>
    </Window>
  );
}
